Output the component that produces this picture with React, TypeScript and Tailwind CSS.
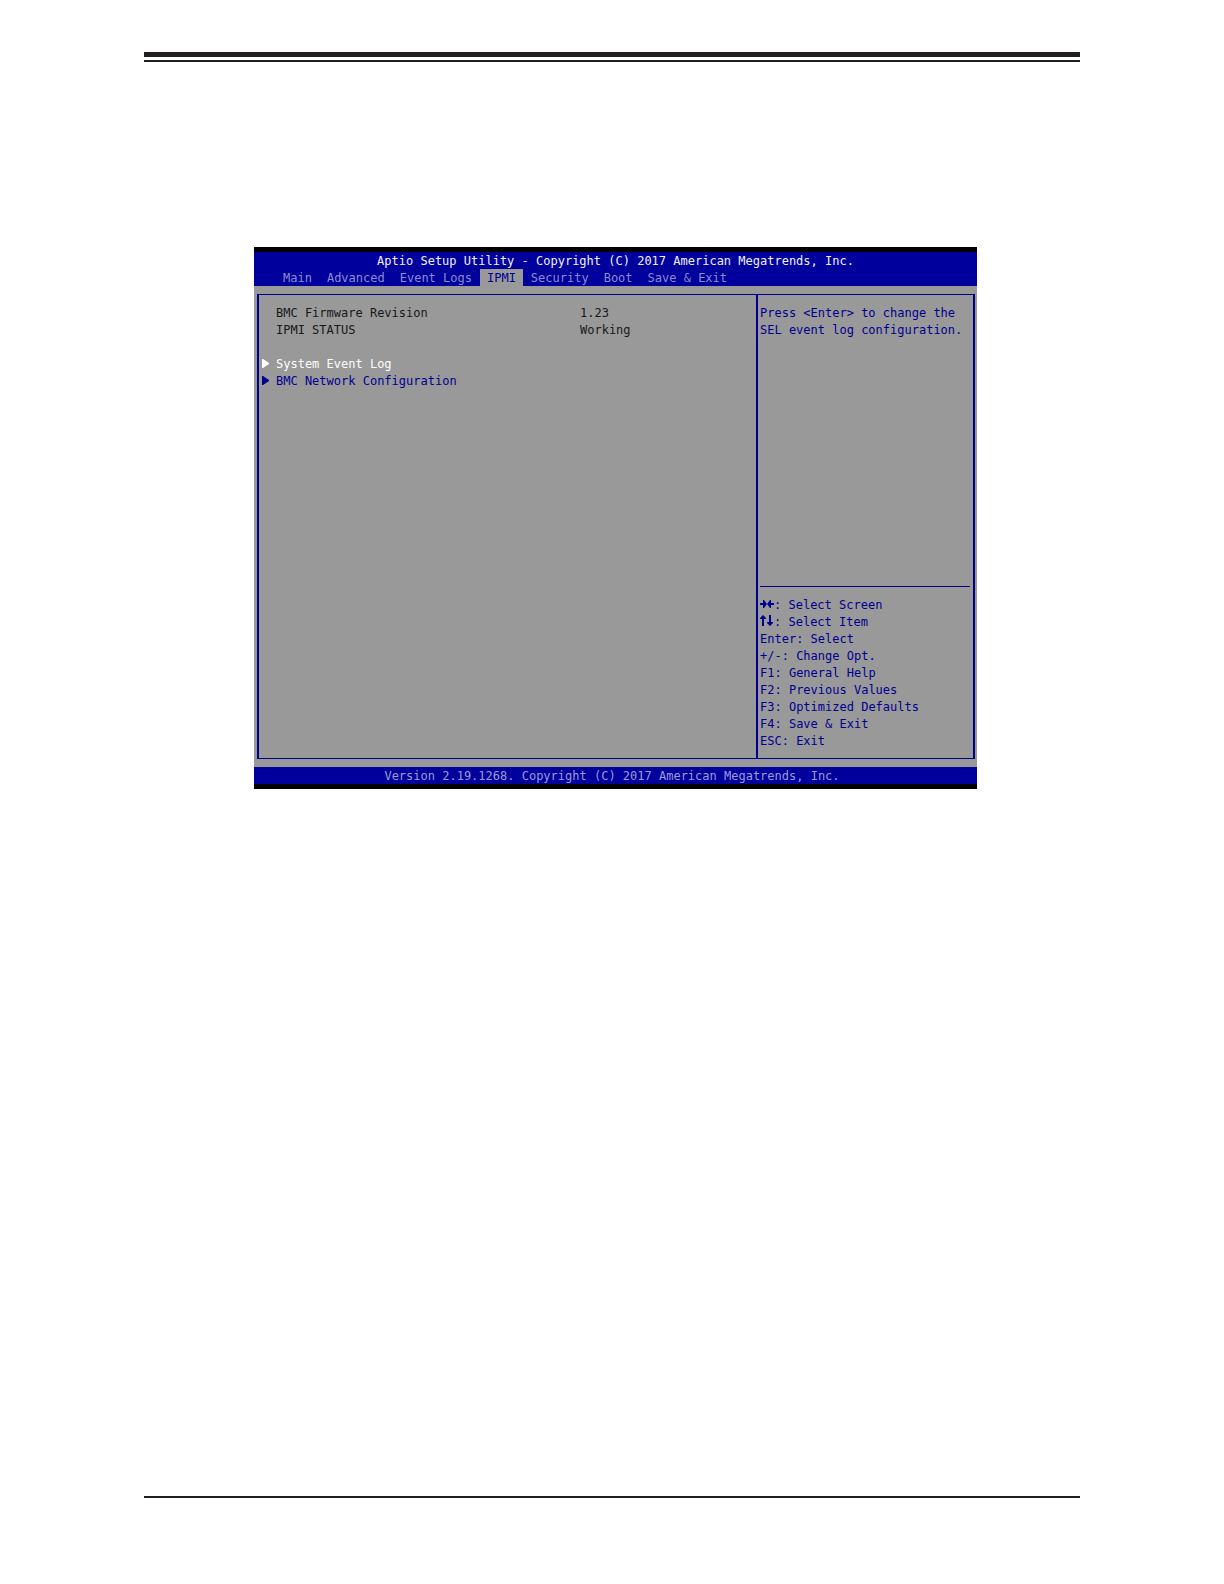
import { type ReactNode } from "react";

const tabs = ["Main", "Advanced", "Event Logs", "IPMI", "Security", "Boot", "Save & Exit"];

const info = [
  { label: "BMC Firmware Revision", value: "1.23" },
  { label: "IPMI STATUS", value: "Working" },
];

const submenus = ["System Event Log", "BMC Network Configuration"];

const keys: { keys: ReactNode; action: string }[] = [
  { keys: <ArrowsHorizontal />, action: "Select Screen" },
  { keys: <ArrowsVertical />, action: "Select Item" },
  { keys: "Enter", action: "Select" },
  { keys: "+/-", action: "Change Opt." },
  { keys: "F1", action: "General Help" },
  { keys: "F2", action: "Previous Values" },
  { keys: "F3", action: "Optimized Defaults" },
  { keys: "F4", action: "Save & Exit" },
  { keys: "ESC", action: "Exit" },
];

/* ── Glyphs ── */
function ArrowsHorizontal() {
  return (
    <svg className="inline-block h-3 w-[14px] align-text-top" viewBox="0 0 14 12" fill="currentColor" aria-hidden="true">
      <path d="M0 5h3V2h1l3 4-3 4H3V7H0zM14 5h-3V2h-1L7 6l3 4h1V7h3z" />
    </svg>
  );
}

function ArrowsVertical() {
  return (
    <svg className="inline-block h-3 w-[14px] align-text-top" viewBox="0 0 14 12" fill="currentColor" aria-hidden="true">
      <path d="M2 11V4H0V3l3-3 3 3v1H4v7zM9 0v7H7v1l3 3 3-3V7h-2V0z" />
    </svg>
  );
}

function Marker() {
  return (
    <svg className="mb-0.5 h-[9px] w-[7px] shrink-0" viewBox="0 0 7 9" fill="currentColor" aria-hidden="true">
      <path d="M0 0h1l6 4v1L1 9H0z" />
    </svg>
  );
}

/* ── Setup screen ── */
function SetupScreen() {
  return (
    <section className="border-y-[5px] border-black bg-[#999999] font-['DejaVu_Sans_Mono',monospace] text-[12px] leading-[17px] text-[#000090]">
      <header className="bg-[#00009c]">
        <h1 className="pt-0.5 text-center leading-[15px] text-[#f0f0f8]">
          Aptio Setup Utility - Copyright (C) 2017 American Megatrends, Inc.
        </h1>
        <nav className="flex gap-px pl-[22px]">
          {tabs.map((tab) => (
            <button
              key={tab}
              type="button"
              className={`px-[7px] pt-0.5 leading-[15px] ${tab === "IPMI" ? "bg-[#999999] text-[#00009c]" : "text-[#8c8cd2]"}`}
            >
              {tab}
            </button>
          ))}
        </nav>
      </header>

      <div className="py-2 pr-[2px] pl-[3px]">
        <div className="flex min-h-[465px] border-x-2 border-y border-[#00008c]">
          <main className="flex-1 pt-[10px]">
            <dl className="mb-[17px] pl-[17px] text-[#181818]">
              {info.map(({ label, value }) => (
                <div key={label} className="flex">
                  <dt className="w-[304px]">{label}</dt>
                  <dd>{value}</dd>
                </div>
              ))}
            </dl>
            {submenus.map((item, i) => (
              <button
                key={item}
                type="button"
                className={`flex items-center gap-[7px] pl-[3px] ${i === 0 ? "text-white" : ""}`}
              >
                <Marker />
                {item}
              </button>
            ))}
          </main>

          <aside className="flex w-[217px] shrink-0 flex-col border-l-2 border-[#00008c] pt-[10px] pr-[3px] pb-2 pl-[2px]">
            <p>Press &lt;Enter&gt; to change the SEL event log configuration.</p>
            <ul className="mt-auto border-t border-[#00008c] pt-[10px]">
              {keys.map((entry) => (
                <li key={entry.action}>
                  {entry.keys}: {entry.action}
                </li>
              ))}
            </ul>
          </aside>
        </div>
      </div>

      <footer className="bg-[#00009c] pt-0.5 pr-[7px] text-center leading-[15px] text-[#9c9cd8]">
        Version 2.19.1268. Copyright (C) 2017 American Megatrends, Inc.
      </footer>
    </section>
  );
}

export default function App() {
  return (
    <div className="flex min-h-screen flex-col bg-white px-36 pt-[52px] pb-[86px]">
      <div className="h-[10px] border-t-[5px] border-b-2 border-[#231f20]" />
      <div className="mt-[185px] mb-auto pr-[103px] pl-[110px]">
        <SetupScreen />
      </div>
      <div className="border-t-2 border-[#231f20]" />
    </div>
  );
}
